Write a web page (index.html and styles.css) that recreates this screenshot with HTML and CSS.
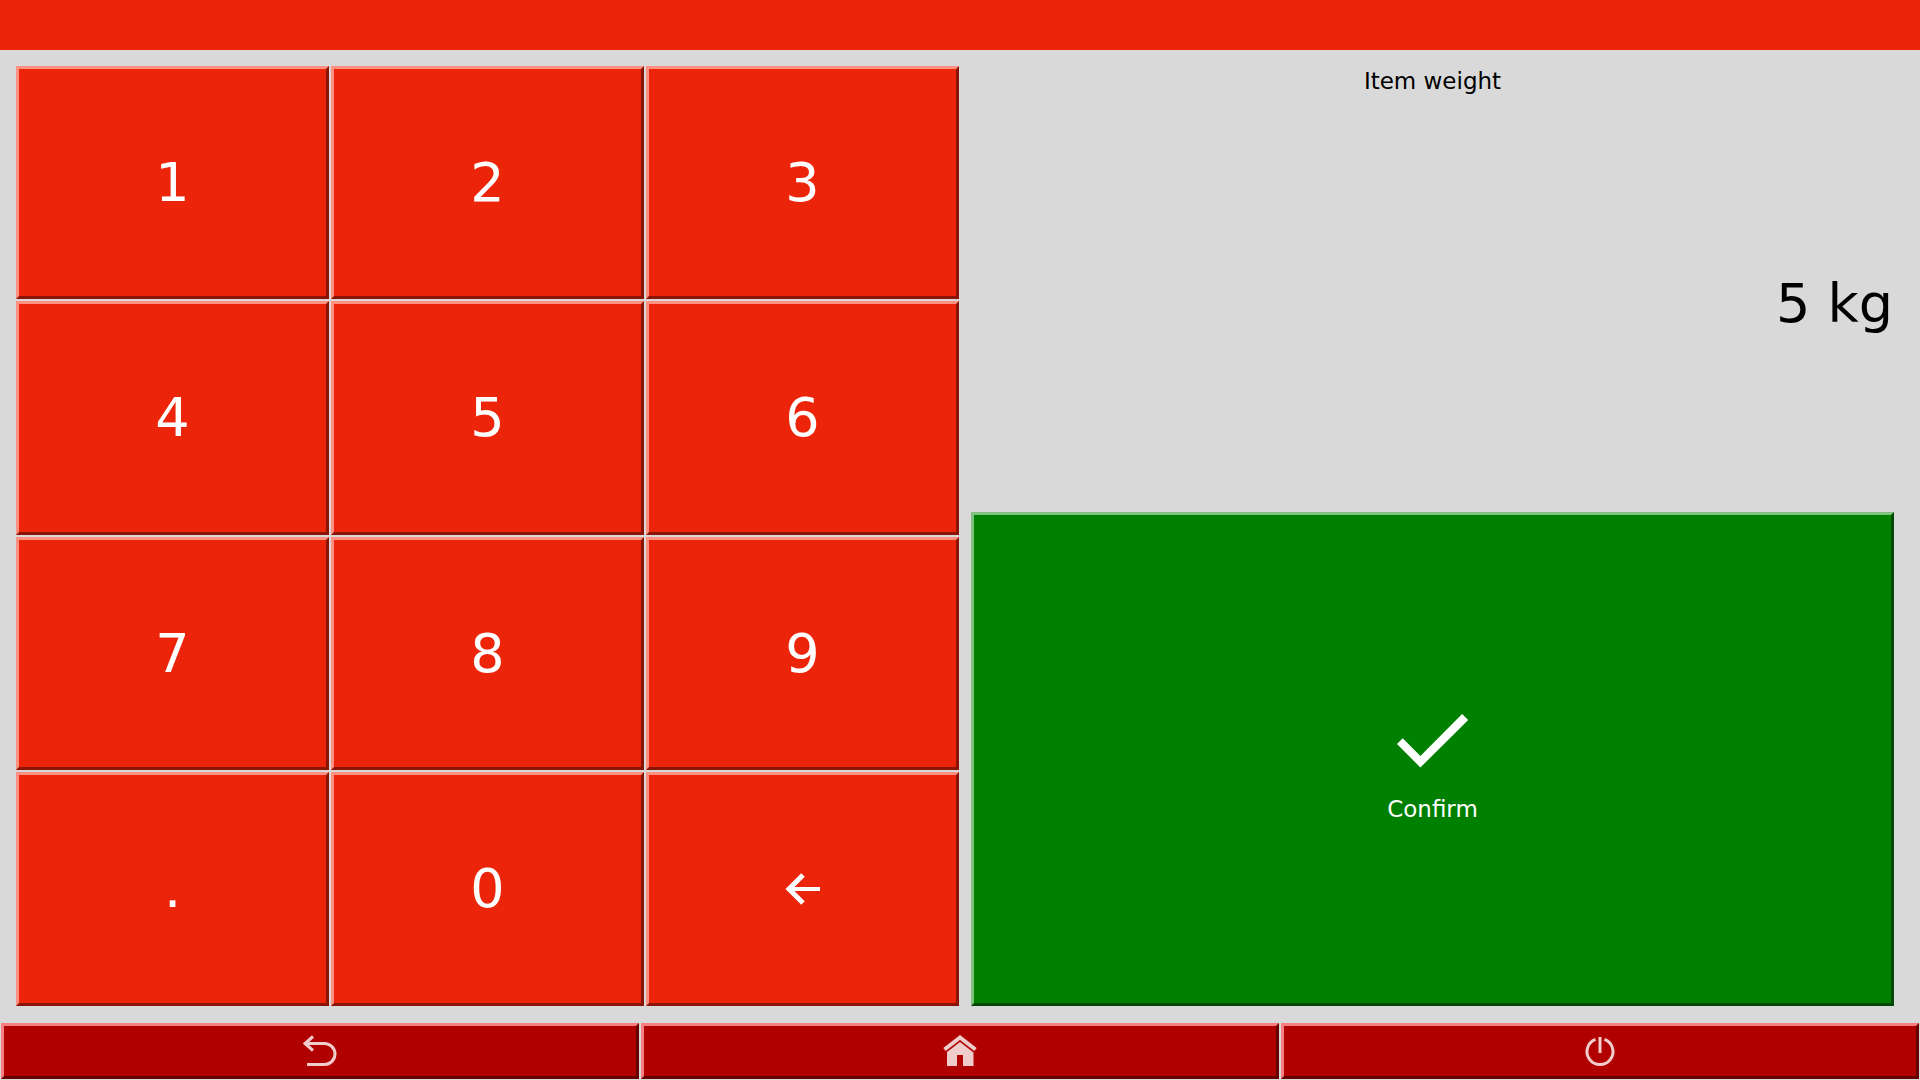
FILE: index.html
```html
<!DOCTYPE html>
<html lang="en">
<head>
<meta charset="utf-8">
<title>Item weight</title>
<link rel="stylesheet" href="styles.css">
</head>
<body>
<header class="topbar"></header>
<main class="content">
  <section class="keypad" aria-label="Keypad">
    <button class="key" type="button">1</button>
    <button class="key" type="button">2</button>
    <button class="key" type="button">3</button>
    <button class="key" type="button">4</button>
    <button class="key" type="button">5</button>
    <button class="key" type="button">6</button>
    <button class="key" type="button">7</button>
    <button class="key" type="button">8</button>
    <button class="key" type="button">9</button>
    <button class="key" type="button">.</button>
    <button class="key" type="button">0</button>
    <button class="key" type="button" aria-label="Backspace">
      <svg class="key-icon" viewBox="0 0 36 36" fill="none" stroke="currentColor" aria-hidden="true"><path d="M18 4 4 18 18 32" stroke-width="5"/><path d="M4 18H35" stroke-width="4"/></svg>
    </button>
  </section>
  <section class="panel">
    <div class="readout">
      <h1 class="label">Item weight</h1>
      <output class="weight">5 kg</output>
    </div>
    <button class="confirm" type="button">
      <svg class="check" viewBox="0 0 88 88" aria-hidden="true"><path d="M8 48 13.700 42.200 31.400 59.900 73.100 18 79.200 24 31.400 71.500Z" fill="currentColor"/></svg>
      <span>Confirm</span>
    </button>
  </section>
</main>
<nav class="bottombar" aria-label="Main">
  <button class="nav-button" type="button" aria-label="Back">
    <svg class="nav-icon" viewBox="0 0 34 34" aria-hidden="true"><path d="M10 2.500 2 9.500 10 16.500M2 9.500H21.500A10.500 10.500 0 0 1 21.500 30.500H4" fill="none" stroke="currentColor" stroke-width="3"/></svg>
  </button>
  <button class="nav-button" type="button" aria-label="Home">
    <svg class="nav-icon" viewBox="0 0 34 34" aria-hidden="true"><path d="M1.500 15.500 17 3.500 32.500 15.500" fill="none" stroke="currentColor" stroke-width="4"/><path d="M17 8 30.500 18.500V32H20V21H14V32H4V18Z" fill="currentColor"/></svg>
  </button>
  <button class="nav-button" type="button" aria-label="Power">
    <svg class="nav-icon" viewBox="0 0 34 34" aria-hidden="true"><path d="M12.500 5.300A13 13 0 1 0 21.500 5.300M17 3V19" fill="none" stroke="currentColor" stroke-width="3"/></svg>
  </button>
</nav>
</body>
</html>
```
FILE: styles.css
```css
* {
  box-sizing: border-box;
}

body {
  display: flex;
  flex-direction: column;
  min-height: 100vh;
  margin: 0;
  background: #d9d9d9;
  color: #000;
  font-family: "DejaVu Sans", sans-serif;
  font-size: 23px;
  line-height: 27px;
}

button {
  display: flex;
  align-items: center;
  justify-content: center;
  margin: 0;
  padding: 0;
  border: 3px solid;
  border-radius: 0;
  color: #fff;
  font: inherit;
}

svg {
  display: block;
}

.topbar {
  height: 50px;
  background: #eb240a;
}

.content {
  display: grid;
  flex: 1;
  grid-template-columns: 943fr 923fr;
  gap: 12px;
  padding: 16px 26px 16px 16px;
}

.keypad {
  display: grid;
  grid-template-columns: repeat(3, 1fr);
  grid-template-rows: 233fr 234fr 233fr 234fr;
  gap: 2px;
}

.key {
  background: #eb240a;
  border-color: #ff9182 #8a1405 #8a1405 #ff9182;
  font-size: 54px;
  line-height: 62px;
}

.key-icon {
  width: 36px;
  height: 36px;
}

.panel {
  display: grid;
  grid-template-rows: 446fr 494fr;
}

.readout {
  display: flex;
  flex-direction: column;
}

.label {
  margin: 0;
  padding-top: 2px;
  font-size: 23px;
  font-weight: normal;
  text-align: center;
}

.weight {
  display: flex;
  flex: 1;
  align-items: center;
  justify-content: flex-end;
  padding-right: 1px;
  font-size: 54px;
  line-height: 62px;
}

.confirm {
  flex-direction: column;
  gap: 12px;
  background: #008000;
  border-color: #80c080 #004a00 #004a00 #80c080;
}

.check {
  width: 88px;
  height: 88px;
}

.bottombar {
  display: grid;
  grid-template-columns: repeat(3, 1fr);
  gap: 2px;
  padding: 1px;
}

.nav-button {
  height: 56px;
  background: #b00000;
  border-color: #f88080 #640000 #640000 #f88080;
  color: #f0cccc;
}

.nav-icon {
  width: 34px;
  height: 34px;
}
```
